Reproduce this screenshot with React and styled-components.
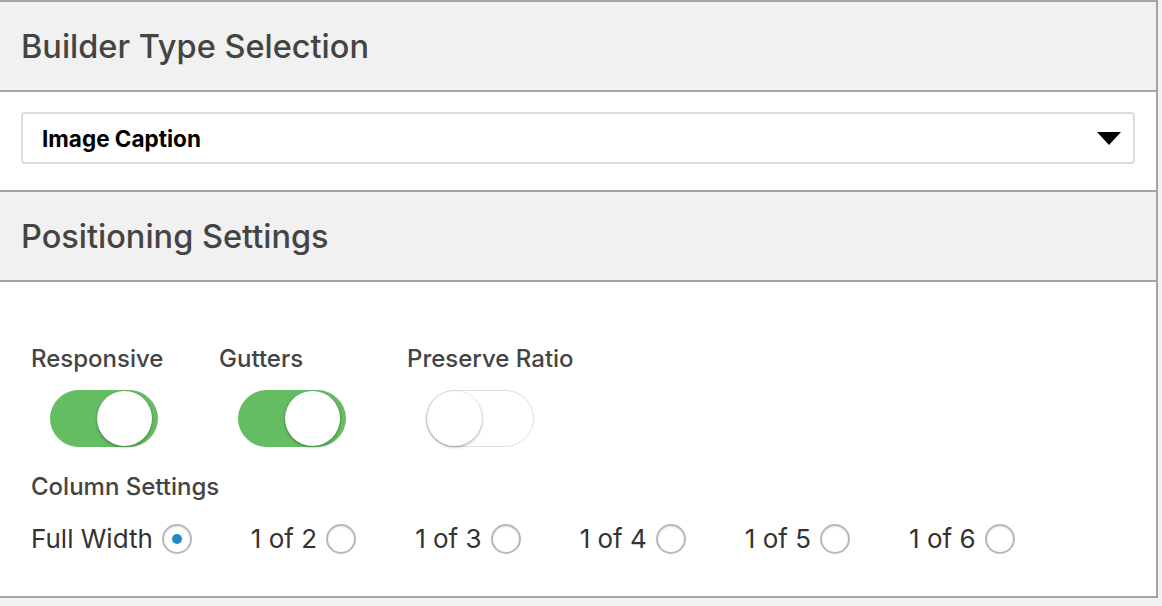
import React, { useState } from 'react';
import styled, { createGlobalStyle } from 'styled-components';

const GlobalStyle = createGlobalStyle`
  html, body {
    margin: 0;
    padding: 0;
    background: #f1f1f1;
  }
  body {
    font-family: Inter, "Noto Sans", sans-serif;
    color: #444;
  }
`;

const Panel = styled.div`
  width: 1156px;
  background: #fff;
  border-top: 2px solid #a0a5aa;
  border-right: 2px solid #a0a5aa;
  border-bottom: 2px solid #a0a5aa;
`;

const SectionHeader = styled.div`
  height: 88px;
  display: flex;
  align-items: center;
  padding: 0 21px;
  background: #f1f1f1;
  border-bottom: 2px solid #a0a5aa;
  font-size: 32.5px;
  font-weight: 500;
  color: #444;
`;

const SelectSection = styled.div`
  padding: 20px 21px 26px;
  border-bottom: 2px solid #a0a5aa;
`;

const SelectBox = styled.div`
  height: 48px;
  display: flex;
  align-items: center;
  justify-content: space-between;
  padding: 0 12px 0 19px;
  border: 2px solid #dcdcdc;
  border-radius: 4px;
  font-size: 22.5px;
  font-weight: 700;
  color: #000;
  cursor: pointer;
`;

const Caret = styled.span`
  width: 0;
  height: 0;
  border-left: 12px solid transparent;
  border-right: 12px solid transparent;
  border-top: 13px solid #000;
`;

const Content = styled.div`
  height: 314px;
  box-sizing: border-box;
  padding: 62px 31px 0;
`;

const ToggleRow = styled.div`
  display: grid;
  grid-template-columns: repeat(3, 188px);
`;

const ToggleGroup = styled.div`
  display: flex;
  flex-direction: column;
  gap: 16px;
`;

const FieldLabel = styled.div`
  font-size: 24px;
  font-weight: 500;
  color: #444;
  line-height: 30px;
  white-space: nowrap;
`;

const Switch = styled.button`
  position: relative;
  width: 108px;
  height: 57px;
  margin-left: 19px;
  padding: 0;
  border-radius: 29px;
  border: 1px solid ${p => (p.on ? '#64bd63' : '#dfdfdf')};
  background: ${p => (p.on ? '#64bd63' : '#fff')};
  cursor: pointer;
`;

const Knob = styled.span`
  position: absolute;
  top: 0;
  left: ${p => (p.on ? '46px' : '0')};
  width: 55px;
  height: 55px;
  border-radius: 50%;
  background: #fff;
  box-shadow: 0 1px 3px rgba(0, 0, 0, 0.4);
`;

const ColumnBlock = styled.div`
  margin-top: 25px;
  display: flex;
  flex-direction: column;
  gap: 21px;
`;

const RadioRow = styled.div`
  display: flex;
  gap: 59px;
`;

const RadioItem = styled.label`
  display: flex;
  align-items: center;
  gap: 9px;
  font-size: 26px;
  color: #333;
  cursor: pointer;
`;

const RadioCircle = styled.span`
  width: 26px;
  height: 26px;
  border-radius: 50%;
  border: 2px solid #b4b9be;
  box-shadow: inset 0 1px 2px rgba(0, 0, 0, 0.1);
  display: flex;
  align-items: center;
  justify-content: center;

  &::after {
    content: '';
    width: 10px;
    height: 10px;
    border-radius: 50%;
    background: #1e8cbe;
    display: ${p => (p.checked ? 'block' : 'none')};
  }
`;

const columns = ['Full Width', '1 of 2', '1 of 3', '1 of 4', '1 of 5', '1 of 6'];

export default function App() {
  const [toggles, setToggles] = useState({ responsive: true, gutters: true, ratio: false });
  const [column, setColumn] = useState('Full Width');

  const flip = key => setToggles(t => ({ ...t, [key]: !t[key] }));

  return (
    <>
      <GlobalStyle />
      <Panel>
        <SectionHeader>Builder Type Selection</SectionHeader>
        <SelectSection>
          <SelectBox>
            Image Caption
            <Caret />
          </SelectBox>
        </SelectSection>
        <SectionHeader>Positioning Settings</SectionHeader>
        <Content>
          <ToggleRow>
            <ToggleGroup>
              <FieldLabel>Responsive</FieldLabel>
              <Switch on={toggles.responsive} onClick={() => flip('responsive')}>
                <Knob on={toggles.responsive} />
              </Switch>
            </ToggleGroup>
            <ToggleGroup>
              <FieldLabel>Gutters</FieldLabel>
              <Switch on={toggles.gutters} onClick={() => flip('gutters')}>
                <Knob on={toggles.gutters} />
              </Switch>
            </ToggleGroup>
            <ToggleGroup>
              <FieldLabel>Preserve Ratio</FieldLabel>
              <Switch on={toggles.ratio} onClick={() => flip('ratio')}>
                <Knob on={toggles.ratio} />
              </Switch>
            </ToggleGroup>
          </ToggleRow>
          <ColumnBlock>
            <FieldLabel>Column Settings</FieldLabel>
            <RadioRow>
              {columns.map(c => (
                <RadioItem key={c} onClick={() => setColumn(c)}>
                  {c}
                  <RadioCircle checked={column === c} />
                </RadioItem>
              ))}
            </RadioRow>
          </ColumnBlock>
        </Content>
      </Panel>
    </>
  );
}
